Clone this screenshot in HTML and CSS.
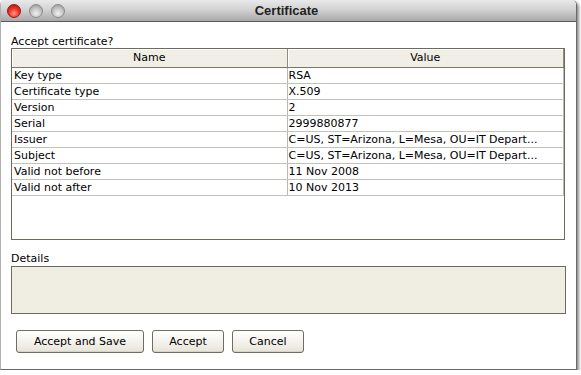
FILE: index.html
```html
<!DOCTYPE html>
<html>
<head>
<meta charset="utf-8">
<link rel="stylesheet" href="styles.css">
</head>
<body>
<div class="window">
  <div class="titlebar">
    <div class="lights">
      <span class="light red"></span>
      <span class="light gray"></span>
      <span class="light gray"></span>
    </div>
    <div class="title">Certificate</div>
  </div>
  <div class="content">
    <div class="label top-label">Accept certificate?</div>
    <div class="grid">
      <table>
        <colgroup><col class="c1"><col class="c2"></colgroup>
        <thead>
          <tr><th>Name</th><th>Value</th></tr>
        </thead>
        <tbody>
          <tr><td>Key type</td><td>RSA</td></tr>
          <tr><td>Certificate type</td><td>X.509</td></tr>
          <tr><td>Version</td><td>2</td></tr>
          <tr><td>Serial</td><td>2999880877</td></tr>
          <tr><td>Issuer</td><td>C=US, ST=Arizona, L=Mesa, OU=IT Depart...</td></tr>
          <tr><td>Subject</td><td>C=US, ST=Arizona, L=Mesa, OU=IT Depart...</td></tr>
          <tr><td>Valid not before</td><td>11 Nov 2008</td></tr>
          <tr><td>Valid not after</td><td>10 Nov 2013</td></tr>
        </tbody>
      </table>
    </div>
    <div class="label details-label">Details</div>
    <div class="details"></div>
    <div class="buttons">
      <button class="btn wide">Accept and Save</button>
      <button class="btn">Accept</button>
      <button class="btn">Cancel</button>
    </div>
  </div>
</div>
</body>
</html>
```

FILE: styles.css
```css
html, body {
  margin: 0;
  padding: 0;
  background: #ffffff;
}
body {
  font-family: "DejaVu Sans", sans-serif;
  font-size: 11px;
  color: #000;
}
.window {
  box-sizing: border-box;
  width: 577px;
  height: 370px;
  border-right: 1px solid #6a6a6a;
  border-bottom: 1px solid #6a6a6a;
  border-left: 1px solid #b0b0b0;
  border-radius: 5px 5px 0 0;
  box-shadow: 2px 2px 3px rgba(0,0,0,0.45);
  background: #fff;
  overflow: hidden;
}
.titlebar {
  height: 21px;
  border-bottom: 1px solid #5a5a5a;
  background: linear-gradient(#e9e9e9, #d3d3d3 45%, #a9a9a9);
  display: flex;
  align-items: center;
  position: relative;
}
.lights {
  display: flex;
  gap: 8px;
  padding-left: 6px;
  padding-top: 1px;
}
.light {
  width: 14px;
  height: 14px;
  border-radius: 50%;
  box-sizing: border-box;
}
.light.red {
  background: radial-gradient(circle at 50% 70%, #ff9a8c 0%, #f0382a 45%, #a50c06 100%);
  border: 1px solid #8a1c14;
}
.light.gray {
  background: radial-gradient(circle at 50% 70%, #f2f2f2 0%, #c4c4c4 50%, #8e8e8e 100%);
  border: 1px solid #8a8a8a;
}
.title {
  position: absolute;
  left: 0;
  right: 0;
  top: 3px;
  text-align: center;
  font-family: "Liberation Sans", Arial, sans-serif;
  font-weight: bold;
  font-size: 13px;
  color: #222;
  padding-right: 4px;
}
.content {
  padding: 0 0 0 10px;
}
.label {
  line-height: 14px;
}
.top-label {
  padding-top: 13px;
  height: 13px;
}
.grid {
  width: 554px;
  height: 192px;
  box-sizing: border-box;
  border: 1px solid #6c6c5e;
  background: #fff;
}
table {
  width: 100%;
  border-collapse: collapse;
  table-layout: fixed;
}
col.c1 { width: 275px; }
th {
  background: #f1efe5;
  font-weight: normal;
  text-align: center;
  height: 18px;
  line-height: 16px;
  padding: 1px 0 0 0;
  box-sizing: border-box;
  border-right: 1px solid #8d8d80;
  border-bottom: 1px solid #77776a;
  box-shadow: inset 1px 1px 0 #ffffff;
}
td {
  height: 16px;
  line-height: 14px;
  padding: 1px 0 0 2px;
  box-sizing: border-box;
  border-right: 1px solid #b9b9b2;
  border-bottom: 1px solid #c3c3bc;
  white-space: nowrap;
  overflow: hidden;
}
td:last-child {
  padding-left: 1px;
}
.details-label {
  padding-top: 12px;
  height: 14px;
  line-height: 14px;
}
.details {
  margin-top: 0;
  width: 555px;
  height: 48px;
  box-sizing: border-box;
  border: 1px solid #6c6c5e;
  background: #f0eee3;
}
.buttons {
  display: flex;
  gap: 8px;
  padding: 16px 0 0 5px;
}
.btn {
  font-family: "DejaVu Sans", sans-serif;
  font-size: 11px;
  color: #000;
  height: 23px;
  width: 72px;
  padding: 0;
  margin: 0;
  border: 1px solid #6e6e62;
  border-radius: 3px;
  background: linear-gradient(#ffffff, #f4f3ee 50%, #e6e4d8);
  box-shadow: inset 0 -1px 0 #d6d4c6;
}
.btn.wide {
  width: 128px;
}
```
